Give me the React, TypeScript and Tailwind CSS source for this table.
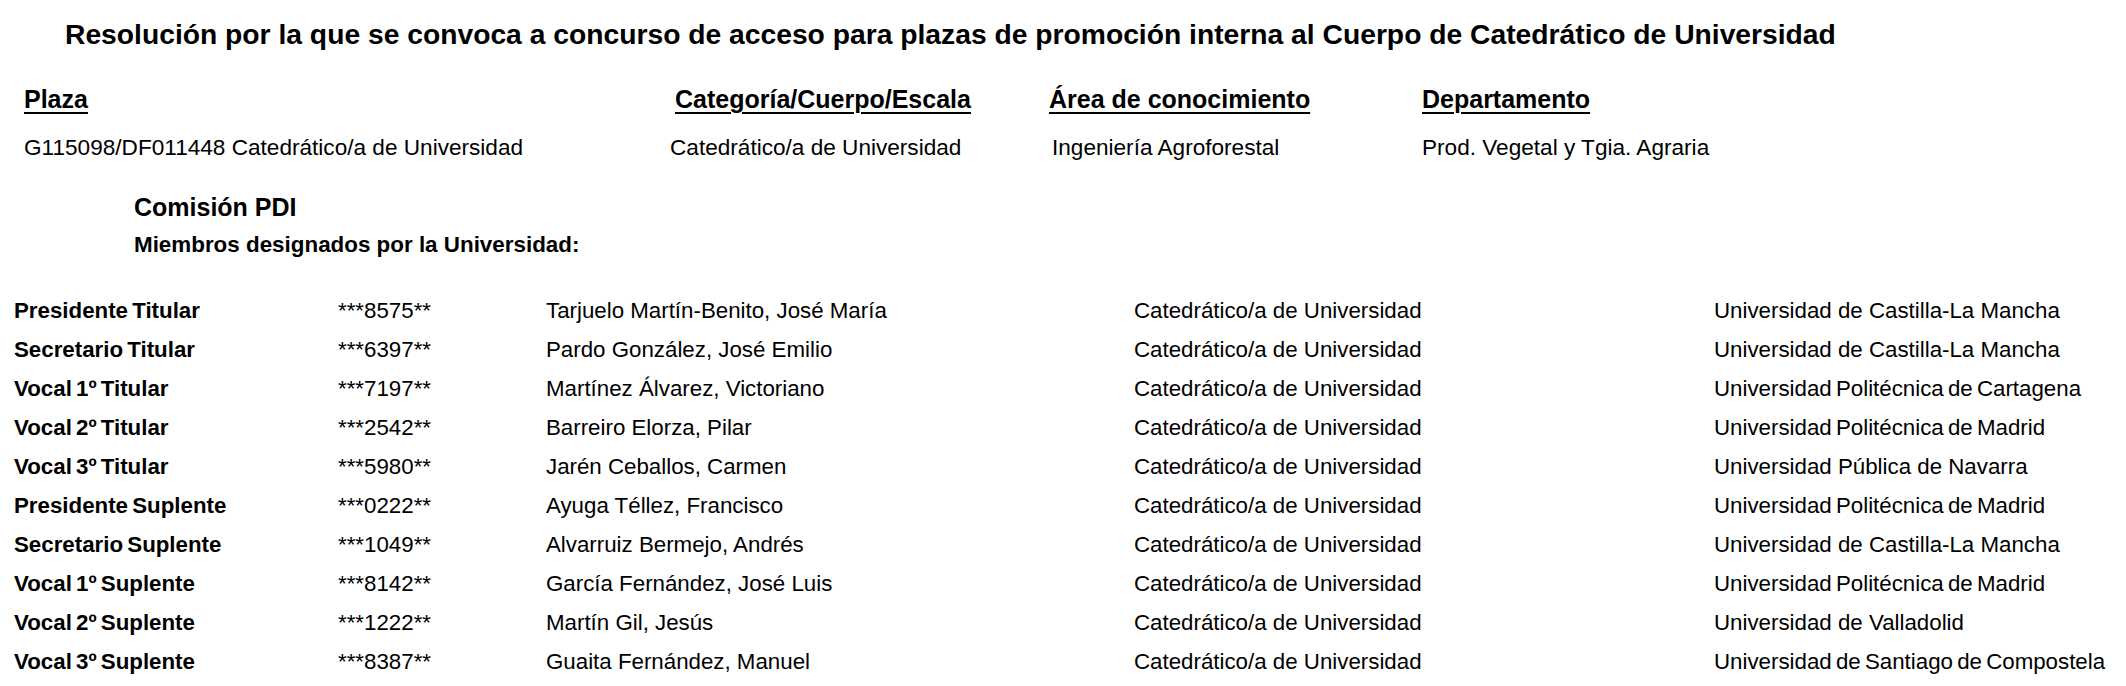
const plaza = [
  { label: "Plaza", value: "G115098/DF011448 Catedrático/a de Universidad" },
  { label: "Categoría/Cuerpo/Escala", value: "Catedrático/a de Universidad" },
  { label: "Área de conocimiento", value: "Ingeniería Agroforestal" },
  { label: "Departamento", value: "Prod. Vegetal y Tgia. Agraria" },
];

const miembros = [
  ["Presidente Titular", "***8575**", "Tarjuelo Martín-Benito, José María", "Universidad de Castilla-La Mancha"],
  ["Secretario Titular", "***6397**", "Pardo González, José Emilio", "Universidad de Castilla-La Mancha"],
  ["Vocal 1º Titular", "***7197**", "Martínez Álvarez, Victoriano", "Universidad Politécnica de Cartagena"],
  ["Vocal 2º Titular", "***2542**", "Barreiro Elorza, Pilar", "Universidad Politécnica de Madrid"],
  ["Vocal 3º Titular", "***5980**", "Jarén Ceballos, Carmen", "Universidad Pública de Navarra"],
  ["Presidente Suplente", "***0222**", "Ayuga Téllez, Francisco", "Universidad Politécnica de Madrid"],
  ["Secretario Suplente", "***1049**", "Alvarruiz Bermejo, Andrés", "Universidad de Castilla-La Mancha"],
  ["Vocal 1º Suplente", "***8142**", "García Fernández, José Luis", "Universidad Politécnica de Madrid"],
  ["Vocal 2º Suplente", "***1222**", "Martín Gil, Jesús", "Universidad de Valladolid"],
  ["Vocal 3º Suplente", "***8387**", "Guaita Fernández, Manuel", "Universidad de Santiago de Compostela"],
];

const apretada = (u: string) => u.includes("Politécnica") || u.includes("Santiago");

export default function App() {
  return (
    <div className="w-[2126px] h-[686px] overflow-hidden bg-white text-black font-['Liberation_Sans',Arial,sans-serif]">
      <h1 className="pl-[65px] pt-[18px] text-[28.25px] leading-[32px] font-bold whitespace-nowrap">
        Resolución por la que se convoca a concurso de acceso para plazas de promoción interna al Cuerpo de Catedrático de Universidad
      </h1>

      {/* datos de la plaza */}
      <div className="mt-[33px] pl-[24px] grid grid-cols-[651px_374px_373px_1fr]">
        {plaza.map((p) => (
          <div key={p.label} className="text-[25px] leading-[32px] font-bold underline underline-offset-[4px] decoration-[2px] whitespace-nowrap">
            {p.label}
          </div>
        ))}
      </div>
      <div className="mt-[17px] pl-[24px] grid grid-cols-[646px_382px_370px_1fr]">
        {plaza.map((p) => (
          <div key={p.label} className="text-[22.6px] leading-[32px] whitespace-nowrap">
            {p.value}
          </div>
        ))}
      </div>

      <div className="pl-[134px] mt-[27px] text-[25px] leading-[32px] font-bold">Comisión PDI</div>
      <div className="pl-[134px] mt-[6px] text-[22.4px] leading-[32px] font-bold">Miembros designados por la Universidad:</div>

      <div className="mt-[30px] pl-[14px]">
        {miembros.map((m) => (
          <div key={m[0]} className="grid grid-cols-[324px_208px_588px_580px_1fr] h-[39px] items-center text-[22.3px] leading-[32px] whitespace-nowrap">
            <div className="font-bold [word-spacing:-2px]">{m[0]}</div>
            <div>{m[1]}</div>
            <div>{m[2]}</div>
            <div>Catedrático/a de Universidad</div>
            <div className={apretada(m[3]) ? "[word-spacing:-2px]" : ""}>{m[3]}</div>
          </div>
        ))}
      </div>
    </div>
  );
}
